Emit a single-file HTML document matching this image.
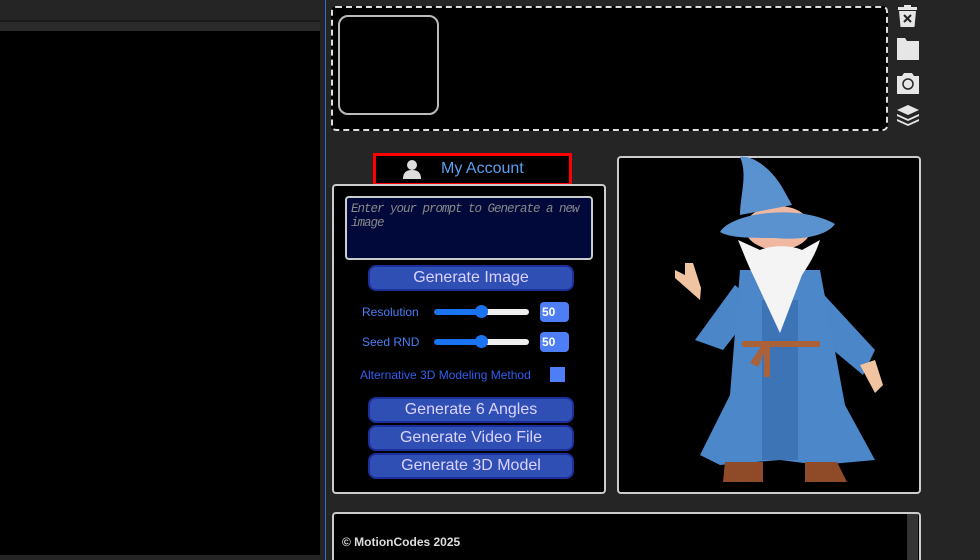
<!DOCTYPE html>
<html style="overflow:hidden;width:980px;height:560px"><head><meta charset="utf-8"><style>
*{margin:0;padding:0;box-sizing:border-box}
body{width:980px;height:560px;overflow:hidden;background:#252525;font-family:"Liberation Sans",sans-serif;position:relative}
.a{position:absolute}
.btn{position:absolute;left:368px;width:206px;height:26px;background:#2f4fb5;border:2px solid #1d2f9a;border-radius:8px;color:#dcd4ff;font-size:16px;text-align:center;line-height:22px}
.lbl{position:absolute;color:#4a7ef5;font-size:12px}
.num{position:absolute;left:540px;width:29px;height:20px;background:#4d7ef5;border-radius:4px;color:#fff;font-size:12px;font-weight:bold;line-height:20px;padding-left:2px}
.trk{position:absolute;left:434px;width:95px;height:6px;border-radius:3px;background:linear-gradient(90deg,#1a73f0 50%,#eee 50%)}
.knob{position:absolute;width:13px;height:13px;border-radius:50%;background:#1a73f0;top:-4px;left:41px}
</style></head><body>
<div class="a" style="left:0;top:0;width:320px;height:20px;background:#252525"></div>
<div class="a" style="left:0;top:20px;width:320px;height:2px;background:#1a1a1a"></div>
<div class="a" style="left:0;top:22px;width:320px;height:9px;background:#2a2a2a"></div>
<div class="a" style="left:0;top:31px;width:320px;height:524px;background:#000"></div>
<div class="a" style="left:325px;top:0;width:1px;height:560px;background:#2f6fd0"></div>

<div class="a" style="left:331px;top:6px;width:557px;height:125px;background:#000;border:2px dashed #ddd;border-radius:5px"></div>
<div class="a" style="left:338px;top:15px;width:101px;height:100px;border:2px solid #bbb;border-radius:10px"></div>

<svg class="a" style="left:893px;top:3px" width="30" height="130" viewBox="0 0 30 130">
<g fill="#e6e6e6">
<rect x="11" y="2" width="7" height="3"/><rect x="5" y="4" width="19" height="3"/>
<path d="M6 8h17l-1.5 16h-14z"/>
<path d="M4 35h8l2 3h12v19h-22z"/>
<path d="M4 73h5l2-3h8l2 3h5v18h-22z"/>
<path d="M15 102l11 5-11 5-11-5z"/><path d="M4 111l11 5 11-5v2l-11 5-11-5z"/><path d="M4 116l11 5 11-5v2l-11 5-11-5z"/>
</g>
<path d="M11 12l7 7M18 12l-7 7" stroke="#252525" stroke-width="2"/>
<circle cx="15" cy="81" r="5" fill="none" stroke="#252525" stroke-width="1.5"/>
</svg>

<div class="a" style="left:373px;top:153px;width:199px;height:33px;background:#000;border:3px solid #f00"></div>
<svg class="a" style="left:402px;top:158px" width="20" height="22"><circle cx="10" cy="7" r="5" fill="#ddd"/><path d="M1 21c0-7 4-9 9-9s9 2 9 9z" fill="#ddd"/></svg>
<div class="a" style="left:441px;top:160px;color:#5b9ff0;font-size:16px">My Account</div>

<div class="a" style="left:332px;top:184px;width:274px;height:310px;background:#000;border:2px solid #ccc;border-radius:4px"></div>
<div class="a" style="left:345px;top:196px;width:248px;height:64px;background:#00093a;border:2px solid #ccc;border-radius:4px;color:#888;font-family:'Liberation Mono',monospace;font-style:italic;font-size:12.5px;letter-spacing:-1px;padding:4px 4px;line-height:14px">Enter your prompt to Generate a new image</div>
<div class="btn" style="top:265px">Generate Image</div>
<div class="lbl" style="left:362px;top:305px">Resolution</div>
<div class="trk" style="top:309px"><div class="knob"></div></div>
<div class="num" style="top:302px">50</div>
<div class="lbl" style="left:362px;top:335px">Seed RND</div>
<div class="trk" style="top:339px"><div class="knob"></div></div>
<div class="num" style="top:332px">50</div>
<div class="lbl" style="left:360px;top:368px;color:#2f5ff0">Alternative 3D Modeling Method</div>
<div class="a" style="left:550px;top:367px;width:15px;height:15px;background:#4d7ef5"></div>
<div class="btn" style="top:397px">Generate 6 Angles</div>
<div class="btn" style="top:425px">Generate Video File</div>
<div class="btn" style="top:453px">Generate 3D Model</div>

<div class="a" style="left:617px;top:156px;width:304px;height:338px;background:#000;border:2px solid #ccc;border-radius:4px"></div>
<svg class="a" style="left:0;top:0" width="980" height="560">
<path d="M735 285l-40 55 28 10 35-45z" fill="#4a86c8"/>
<path d="M700 300l-25-22 0-8 10 5 0-12 8 0 8 25z" fill="#f0c4a0"/>
<path d="M815 285l60 65 -12 25 -48-40z" fill="#4a86c8"/>
<path d="M860 365l15-5 8 25-8 8z" fill="#f0c4a0"/>
<path d="M740 270h80l25 135 30 55-55 5-40-5-60 5-20-10 30-60z" fill="#4b87c9"/>
<path d="M762 300h36v160h-36z" fill="#3c74b5"/>
<rect x="742" y="341" width="78" height="6" fill="#a9623a"/>
<path d="M762 345l-12 18 8 4 6-14v24h6v-30z" fill="#a9623a"/>
<path d="M725 462h38v20h-40z" fill="#8f4a28"/><path d="M805 462h32l10 20h-42z" fill="#8f4a28"/>
<ellipse cx="778" cy="228" rx="33" ry="22" fill="#f0b8a0"/>
<path d="M738 240c5 12 10 25 15 35l27 58 22-58c8-12 14-22 18-35l-18 10c-10-5-30-5-42 0z" fill="#f4f4f4"/>
<path d="M740 215c0-20 8-40 0-58 12-2 30 10 42 30l10 18z" fill="#5a92d0"/>
<path d="M720 232c12-20 80-28 115-8-10 14-40 16-60 14-25 0-45 0-55-6z" fill="#5a92d0"/>
</svg>

<div class="a" style="left:332px;top:512px;width:589px;height:52px;background:#000;border:2px solid #ccc;border-radius:4px"></div>
<div class="a" style="left:907px;top:514px;width:11px;height:46px;background:#333"></div>
<div class="a" style="left:342px;top:535px;color:#ddd;font-size:12px;font-weight:bold">© MotionCodes 2025</div>
</body></html>
